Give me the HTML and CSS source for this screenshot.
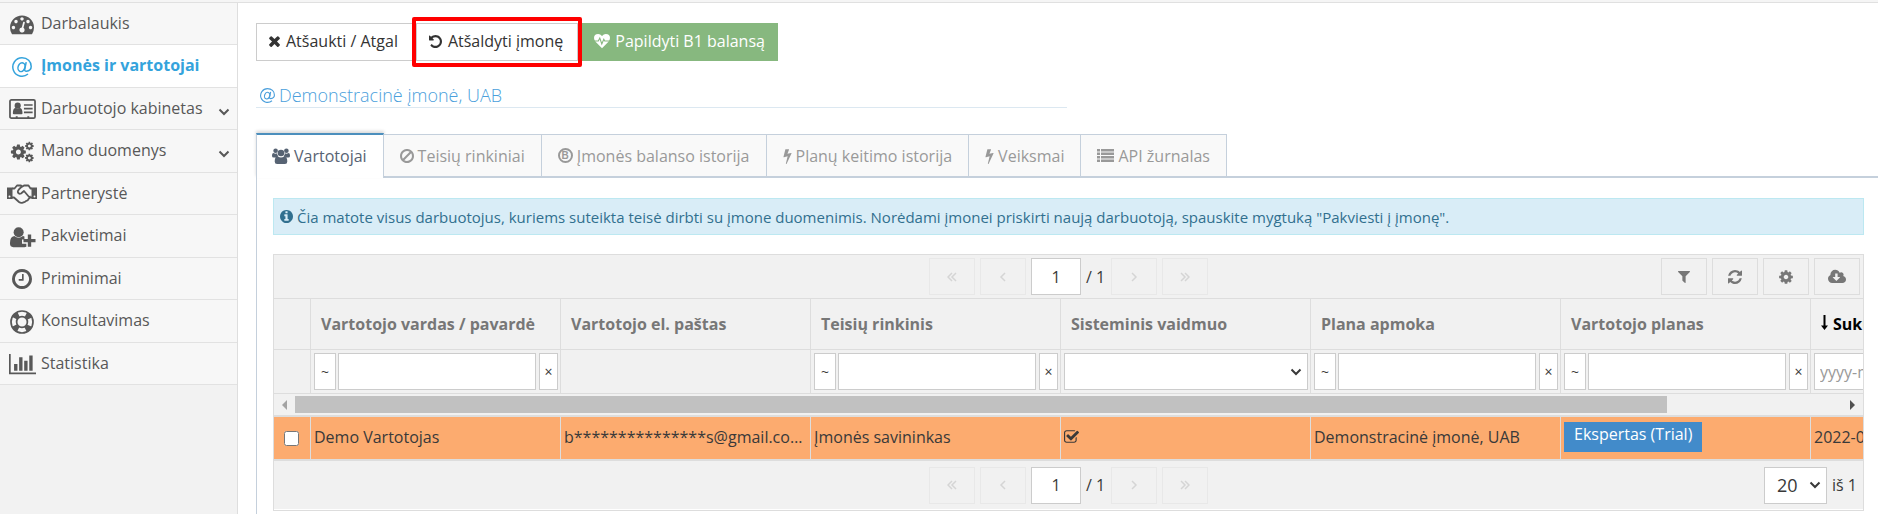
FILE: index.html
```html
<!DOCTYPE html>
<html lang="lt">
<head>
<meta charset="utf-8">
<title>Įmonės ir vartotojai</title>
<link rel="stylesheet" href="styles.css">
</head>
<body>
<svg class="sprite" aria-hidden="true">
  <symbol id="dash" viewBox="0 0 1792 1792"><path d="M384 1152q0-53-37.500-90.500t-90.500-37.500-90.500 37.500-37.500 90.500 37.500 90.500 90.500 37.500 90.500-37.500 37.500-90.500zm192-448q0-53-37.500-90.500t-90.500-37.500-90.500 37.500-37.500 90.500 37.500 90.500 90.500 37.500 90.500-37.500 37.500-90.500zm428 481l101-382q6-26-7.500-48.500t-38.500-29.500-48 6.500-30 39.500l-101 382q-60 5-107 43.500t-63 98.500q-20 77 20 146t117 89 146-20 89-117q16-60-6-117t-72-91zm660-33q0-53-37.500-90.500t-90.500-37.500-90.500 37.500-37.500 90.500 37.500 90.500 90.500 37.500 90.500-37.500 37.500-90.500zm-640-640q0-53-37.500-90.500t-90.500-37.500-90.500 37.500-37.500 90.500 37.500 90.500 90.500 37.500 90.500-37.500 37.500-90.500zm448 192q0-53-37.500-90.500t-90.500-37.500-90.500 37.500-37.500 90.500 37.500 90.500 90.500 37.500 90.500-37.500 37.500-90.500zm320 448q0 261-141 483-19 29-54 29h-1402q-35 0-54-29-141-221-141-483 0-182 71-348t191-286 286-191 348-71 348 71 286 191 191 286 71 348z"/></symbol>
  <symbol id="at" viewBox="0 0 20 20"><g fill="none" stroke="currentColor" stroke-width="1.500"><ellipse cx="9.500" cy="10.200" rx="3.400" ry="4.500" transform="rotate(20 9.500 10.200)"/><path d="M14.200 5.200L12.700 12.400Q12.500 14.300 14.400 14.200 19.200 13.600 19.200 9.400C19.200 4.500 15.500.8 10 .8A9.200 9.200 0 1 0 16 17"/></g></symbol>
  <symbol id="card" viewBox="0 0 28 22"><rect x="1" y="1.500" width="26" height="19" rx="1.500" fill="none" stroke="currentColor" stroke-width="1.800"/><circle cx="9" cy="7.500" r="3.200"/><path d="M4 15.500q0-5.500 3-5.500 2 1.500 4 0 3 0 3 5.500 0 1-1 1h-8q-1 0-1-1zM15.500 6h9v1.700h-9zM15.500 9.800h9v1.700h-9zM15.500 13.600h9v1.700h-9zM7 18.500h2v2h-2zM19 18.500h2v2h-2z"/></symbol>
  <symbol id="cog" viewBox="0 0 1792 1792"><path d="M1152 896q0-106-75-181t-181-75-181 75-75 181 75 181 181 75 181-75 75-181zm512-109v222q0 12-8 23t-20 13l-185 28q-19 54-39 91 35 50 107 138 10 12 10 25t-9 23q-27 37-99 108t-94 71q-12 0-26-9l-138-108q-44 23-91 38-16 136-29 186-7 28-36 28h-222q-14 0-24.500-8.500t-11.500-21.500l-28-184q-49-16-90-37l-141 107q-10 9-25 9-14 0-25-11-126-114-165-168-7-10-7-23 0-12 8-23 15-21 51-66.500t54-70.500q-27-50-41-99l-183-27q-13-2-21-12.500t-8-23.500v-222q0-12 8-23t19-13l186-28q14-46 39-92-40-57-107-138-10-12-10-24 0-10 9-23 26-36 98.500-107.500t94.500-71.500q13 0 26 10l138 107q44-23 91-38 16-136 29-186 7-28 36-28h222q14 0 24.500 8.500t11.500 21.500l28 184q49 16 90 37l142-107q9-9 24-9 13 0 25 10 129 119 165 170 7 8 7 22 0 12-8 23-15 21-51 66.500t-54 70.500q26 50 41 98l183 28q13 2 21 12.500t8 23.500z"/></symbol>
  <symbol id="cogs" viewBox="0 0 26 24"><use href="#cog" x="-1" y="2.500" width="19" height="19"/><use href="#cog" x="15" y="0" width="11" height="11"/><use href="#cog" x="15" y="13" width="11" height="11"/></symbol>
  <symbol id="shake" viewBox="0 0 30 20"><path d="M0 3.500h5.500v11.500H0zM24.500 3.500H30v11.500h-5.500z"/><g fill="none" stroke="currentColor" stroke-width="1.800" stroke-linejoin="round"><path d="M5 4.500h2.500L10 1.500h4l1.500 1L17 1.500h4.500l2 3H25M5 13.500h2l5 4.500q2 1.500 4 .5 2-.2 3-1.500 2 0 2.500-2 2-1 1-3M25 13.500h-2.500L17 7l-3 2.500q-2 1-3-1t4-6"/></g><g fill="#f7f7f7"><circle cx="2.500" cy="12.500" r="1"/><circle cx="27.500" cy="12.500" r="1"/></g></symbol>
  <symbol id="userplus" viewBox="0 0 28 21"><circle cx="10" cy="5.500" r="5.200"/><path d="M1 17q0-7 4.500-7.500 4.500 3.500 9 0l1.500.5v3h-2.500v4.500H18v3q-1 .5-2 .5H4.500Q1 21 1 17zM19.500 8h3.500v4.500h4.500V16H23v4.500h-3.500V16H15v-3.500h4.500z"/></symbol>
  <symbol id="clock" viewBox="128 128 1536 1536"><path d="M1024 544v448q0 14-9 23t-23 9h-320q-14 0-23-9t-9-23v-64q0-14 9-23t23-9h224v-352q0-14 9-23t23-9h64q14 0 23 9t9 23zm416 352q0-148-73-273t-198-198-273-73-273 73-198 198-73 273 73 273 198 198 273 73 273-73 198-198 73-273zm224 0q0 209-103 385.500t-279.500 279.500-385.500 103-385.500-103-279.500-279.500-103-385.500 103-385.500 279.500-279.500 385.500-103 385.500 103 279.500 279.500 103 385.500z"/></symbol>
  <symbol id="ring" viewBox="0 0 24 24"><g fill="none" stroke="currentColor"><circle cx="12" cy="12" r="11" stroke-width="1.700"/><circle cx="12" cy="12" r="5.400" stroke-width="1.700"/><circle cx="12" cy="12" r="8.200" stroke-width="5.500" stroke-dasharray="5.400 7.480" stroke-dashoffset="-3.740"/></g></symbol>
  <symbol id="chart" viewBox="0 128 2048 1536"><path d="M640 896v512h-256v-512h256zm384-512v1024h-256v-1024h256zm1024 1152v128h-2048v-1536h128v1408h1920zm-640-896v768h-256v-768h256zm384-384v1152h-256v-1152h256z"/></symbol>
  <symbol id="chev" viewBox="0 0 12 8"><path d="M1.500 1.500L6 6l4.500-4.500" fill="none" stroke="currentColor" stroke-width="2"/></symbol>
  <symbol id="times" viewBox="302 238 1188 1316"><path d="M1490 1322q0 40-28 68l-136 136q-28 28-68 28t-68-28l-294-294-294 294q-28 28-68 28t-68-28l-136-136q-28-28-28-68t28-68l294-294-294-294q-28-28-28-68t28-68l136-136q28-28 68-28t68 28l294 294 294-294q28-28 68-28t68 28l136 136q28 28 28 68t-28 68l-294 294 294 294q28 28 28 68z"/></symbol>
  <symbol id="undo" viewBox="128 128 1536 1536"><path d="M1664 896q0 156-61 298t-164 245-245 164-298 61q-172 0-327-72.500t-264-204.500q-7-10-6.500-22.500t8.500-20.500l137-138q10-9 25-9 16 2 23 12 73 95 179 147t225 52q104 0 198.500-40.500t163.500-109.500 109.500-163.500 40.500-198.500-40.500-198.500-109.500-163.500-163.500-109.500-198.500-40.500q-98 0-188 35.500t-160 101.500l137 138q31 30 14 69-17 40-59 40h-448q-26 0-45-19t-19-45v-448q0-42 40-59 39-17 69 14l130 129q107-101 244.500-156.500t284.500-55.500q156 0 298 61t245 164 164 245 61 298z"/></symbol>
  <symbol id="heart" viewBox="0 0 16 15"><path d="M8 14.800L1.800 8.600Q0 6.600 0 4.600 0 .5 4.200.5 6.300.5 8 2.600 9.700.5 11.800.5 16 .5 16 4.600q0 2-1.800 4z"/><path d="M0 7.500h4.300L5.800 4.600l2 5.800 2-4.700.9 1.800H16" fill="none" stroke="#87b87f" stroke-width="1.100"/></symbol>
  <symbol id="users" viewBox="0 0 18 16"><circle cx="3.600" cy="2.800" r="2.300"/><circle cx="14.400" cy="2.800" r="2.300"/><circle cx="9" cy="5" r="3.300"/><path d="M0 8q0-3 1.500-3 2 1.300 3.600.3Q5 7 6.300 8.300 4.600 8.400 3.800 9.600H1.700Q0 9.600 0 8zM18 8q0-3-1.500-3-2 1.300-3.600.3 0 1.700-1.200 3 1.700.1 2.500 1.300h2.100Q18 9.600 18 8zM2.700 13.500q0-5 3.200-5 3.100 2.200 6.200 0 3.200 0 3.200 5 0 2.500-2.400 2.500H5.100q-2.400 0-2.400-2.500z"/></symbol>
  <symbol id="ban" viewBox="128 128 1536 1536"><path d="M1440 893q0-161-87-295l-754 753q137 89 297 89 111 0 211.500-43.500t173.500-116.500 116-174.500 43-212.500zm-999 299l755-754q-135-91-300-91-148 0-273 73t-198 199-73 274q0 162 89 299zm1223-299q0 157-61 300t-163.500 246-245 164-298.500 61-298.500-61-245-164-163.500-246-61-300 61-299.500 163.500-245.500 245-164 298.500-61 298.500 61 245 164 163.500 245.500 61 299.500z"/></symbol>
  <symbol id="bolt" viewBox="440 0 910 1792"><path d="M1333 566q18 20 7 44l-540 1157q-13 25-42 25-4 0-14-2-17-5-25.500-19t-4.500-30l197-808-406 101q-4 1-12 1-18 0-31-11-18-15-13-39l201-825q4-14 16-23t28-9h328q19 0 32 12.500t13 29.500q0 8-5 18l-171 463 396-98q8-2 12-2 19 0 34 15z"/></symbol>
  <symbol id="list" viewBox="0 0 17 13"><path d="M0 0h3v2.500H0zM4 0h13v2.500H4zM0 3.500h3V6H0zM4 3.500h13V6H4zM0 7h3v2.500H0zM4 7h13v2.500H4zM0 10.500h3V13H0zM4 10.500h13V13H4z"/></symbol>
  <symbol id="info" viewBox="128 128 1536 1536"><path d="M1152 1376v-160q0-14-9-23t-23-9h-96v-512q0-14-9-23t-23-9h-320q-14 0-23 9t-9 23v160q0 14 9 23t23 9h96v320h-96q-14 0-23 9t-9 23v160q0 14 9 23t23 9h448q14 0 23-9t9-23zm-128-896v-160q0-14-9-23t-23-9h-192q-14 0-23 9t-9 23v160q0 14 9 23t23 9h192q14 0 23-9t9-23zm640 416q0 209-103 385.500t-279.500 279.500-385.500 103-385.500-103-279.500-279.500-103-385.500 103-385.500 279.500-279.500 385.500-103 385.500 103 279.500 279.500 103 385.500z"/></symbol>
  <symbol id="filter" viewBox="190 256 1412 1408"><path d="M1595 295q17 41-14 70l-493 493v742q0 42-39 59-13 5-25 5-27 0-45-19l-256-256q-19-19-19-45v-486l-493-493q-31-29-14-70 17-39 59-39h1280q42 0 59 39z"/></symbol>
  <symbol id="refresh" viewBox="128 128 1536 1536"><path d="M1639 1056q0 5-1 7-64 268-268 434.500t-478 166.500q-146 0-282.500-55t-243.500-157l-129 129q-19 19-45 19t-45-19-19-45v-448q0-26 19-45t45-19h448q26 0 45 19t19 45-19 45l-137 137q71 66 161 102t187 36q134 0 250-65t186-179q11-17 53-117 8-23 30-23h192q13 0 22.500 9.500t9.500 22.500zm25-800v448q0 26-19 45t-45 19h-448q-26 0-45-19t-19-45 19-45l138-138q-148-137-349-137-134 0-250 65t-186 179q-11 17-53 117-8 23-30 23h-199q-13 0-22.500-9.500t-9.500-22.500v-7q65-268 270-434.500t480-166.500q146 0 284 55.500t245 156.500l130-129q19-19 45-19t45 19 19 45z"/></symbol>
  <symbol id="cloud" viewBox="-64 256 1920 1280"><path d="M1216 928q0-14-9-23t-23-9h-224v-352q0-13-9.500-22.500t-22.500-9.500h-192q-13 0-22.500 9.500t-9.500 22.500v352h-224q-13 0-22.500 9.500t-9.500 22.500q0 14 9 23l352 352q9 9 23 9t23-9l351-351q10-12 10-24zm640 224q0 159-112.500 271.500t-271.500 112.500h-1088q-185 0-316.500-131.500t-131.500-316.500q0-130 70-240t188-165q-2-30-2-43 0-212 150-362t362-150q156 0 285.500 87t188.500 231q71-62 166-62 106 0 181 75t75 181q0 76-41 138 130 31 213.500 135.500t83.500 238.500z"/></symbol>
  <symbol id="checked" viewBox="64 128 1664 1408"><path d="M1472 930v318q0 119-84.500 203.500t-203.500 84.500h-832q-119 0-203.500-84.500t-84.500-203.500v-832q0-119 84.500-203.500t203.500-84.500h832q63 0 117 25 15 7 18 23 3 17-9 29l-49 49q-10 10-23 10-3 0-9-2-23-6-45-6h-832q-66 0-113 47t-47 113v832q0 66 47 113t113 47h832q66 0 113-47t47-113v-254q0-13 9-22l64-64q10-10 23-10 6 0 12 3 20 8 20 29zm231-489l-814 814q-24 24-57 24t-57-24l-430-430q-24-24-24-57t24-57l110-110q24-24 57-24t57 24l263 263 647-647q24-24 57-24t57 24l110 110q24 24 24 57t-24 57z"/></symbol>
  <symbol id="left" viewBox="0 0 10 10"><path d="M7 1L3 5l4 4" fill="none" stroke="currentColor" stroke-width="1.500"/></symbol>
  <symbol id="right" viewBox="0 0 10 10"><path d="M3 1l4 4-4 4" fill="none" stroke="currentColor" stroke-width="1.500"/></symbol>
  <symbol id="first" viewBox="0 0 10 10"><path d="M5 1L1 5l4 4M9 1L5 5l4 4" fill="none" stroke="currentColor" stroke-width="1.500"/></symbol>
  <symbol id="last" viewBox="0 0 10 10"><path d="M1 1l4 4-4 4M5 1l4 4-4 4" fill="none" stroke="currentColor" stroke-width="1.500"/></symbol>
  <symbol id="down" viewBox="0 0 7 15"><path d="M2.500 0h2v10.500H7L3.500 15 0 10.500h2.500z"/></symbol>
</svg>
<div class="topline"></div>
<div class="app">
  <nav class="sidebar">
    <ul class="menu">
      <li><a href="#"><span class="slot"><svg class="i24"><use href="#dash"/></svg></span>Darbalaukis</a></li>
      <li class="current"><a href="#"><span class="slot"><svg class="i20"><use href="#at"/></svg></span>Įmonės ir vartotojai</a></li>
      <li><a href="#"><span class="slot"><svg class="i26"><use href="#card"/></svg></span>Darbuotojo kabinetas<svg class="arrow"><use href="#chev"/></svg></a></li>
      <li><a href="#"><span class="slot"><svg class="i26"><use href="#cogs"/></svg></span>Mano duomenys<svg class="arrow"><use href="#chev"/></svg></a></li>
      <li><a href="#"><span class="slot"><svg class="i30"><use href="#shake"/></svg></span>Partnerystė</a></li>
      <li><a href="#"><span class="slot"><svg class="i26"><use href="#userplus"/></svg></span>Pakvietimai</a></li>
      <li><a href="#"><span class="slot"><svg class="i20"><use href="#clock"/></svg></span>Priminimai</a></li>
      <li><a href="#"><span class="slot"><svg class="i24"><use href="#ring"/></svg></span>Konsultavimas</a></li>
      <li><a href="#"><span class="slot"><svg class="i26"><use href="#chart"/></svg></span>Statistika</a></li>
    </ul>
  </nav>
  <main class="main">
    <div class="actions">
      <button class="btn"><svg class="i11"><use href="#times"/></svg>Atšaukti / Atgal</button>
      <button class="btn marked"><svg class="i13"><use href="#undo"/></svg>Atšaldyti įmonę</button>
      <button class="btn success"><svg class="i16"><use href="#heart"/></svg>Papildyti B1 balansą</button>
    </div>
    <h1 class="title"><svg class="i15"><use href="#at"/></svg>Demonstracinė įmonė, UAB</h1>
    <div class="tabs">
      <a href="#" class="tab active"><svg class="i18"><use href="#users"/></svg>Vartotojai</a>
      <a href="#" class="tab"><svg class="i14"><use href="#ban"/></svg>Teisių rinkiniai</a>
      <a href="#" class="tab"><span class="coin">B</span>Įmonės balanso istorija</a>
      <a href="#" class="tab"><svg class="i9"><use href="#bolt"/></svg>Planų keitimo istorija</a>
      <a href="#" class="tab"><svg class="i9"><use href="#bolt"/></svg>Veiksmai</a>
      <a href="#" class="tab"><svg class="i17"><use href="#list"/></svg>API žurnalas</a>
    </div>
    <section class="panel">
      <p class="alert"><svg class="i13"><use href="#info"/></svg>Čia matote visus darbuotojus, kuriems suteikta teisė dirbti su įmone duomenimis. Norėdami įmonei priskirti naują darbuotoją, spauskite mygtuką "Pakviesti į įmonę".</p>
      <div class="grid">
        <div class="bar">
          <div class="pager">
            <button class="tool" disabled aria-label="Pirmas"><svg class="i10"><use href="#first"/></svg></button>
            <button class="tool" disabled aria-label="Ankstesnis"><svg class="i10"><use href="#left"/></svg></button>
            <input class="page" value="1" aria-label="Puslapis">
            <span class="total">/ 1</span>
            <button class="tool" disabled aria-label="Kitas"><svg class="i10"><use href="#right"/></svg></button>
            <button class="tool" disabled aria-label="Paskutinis"><svg class="i10"><use href="#last"/></svg></button>
          </div>
          <div class="side">
            <button class="tool" aria-label="Filtras"><svg class="i12"><use href="#filter"/></svg></button>
            <button class="tool" aria-label="Atnaujinti"><svg class="i14"><use href="#refresh"/></svg></button>
            <button class="tool" aria-label="Nustatymai"><svg class="i16"><use href="#cog"/></svg></button>
            <button class="tool" aria-label="Atsisiųsti"><svg class="i18"><use href="#cloud"/></svg></button>
          </div>
        </div>
        <div class="clip">
          <table class="cells">
            <colgroup><col class="pick"><col span="7" class="wide"></colgroup>
            <thead>
              <tr class="names">
                <th></th><th>Vartotojo vardas / pavardė</th><th>Vartotojo el. paštas</th><th>Teisių rinkinis</th><th>Sisteminis vaidmuo</th><th>Plana apmoka</th><th>Vartotojo planas</th><th class="sorted"><svg class="sort"><use href="#down"/></svg>Sukurta</th>
              </tr>
              <tr class="filters">
                <td></td>
                <td><div class="filter"><button class="op">~</button><input aria-label="Vartotojo vardas / pavardė"><button class="clear">×</button></div></td>
                <td></td>
                <td><div class="filter"><button class="op">~</button><input aria-label="Teisių rinkinis"><button class="clear">×</button></div></td>
                <td><div class="filter choose"><select aria-label="Sisteminis vaidmuo"><option></option></select><svg class="caret"><use href="#chev"/></svg></div></td>
                <td><div class="filter"><button class="op">~</button><input aria-label="Plana apmoka"><button class="clear">×</button></div></td>
                <td><div class="filter"><button class="op">~</button><input aria-label="Vartotojo planas"><button class="clear">×</button></div></td>
                <td><div class="filter"><input class="date" placeholder="yyyy-mm-dd" aria-label="Sukurta"></div></td>
              </tr>
            </thead>
          </table>
        </div>
        <div class="scroll"><span class="prev"></span><span class="track"><span class="thumb"></span></span><span class="next"></span></div>
        <div class="clip">
          <table class="cells rows">
            <colgroup><col class="pick"><col span="7" class="wide"></colgroup>
            <tbody>
              <tr>
                <td class="tick"><input type="checkbox" aria-label="Pažymėti eilutę"></td><td>Demo Vartotojas</td><td>b***************s@gmail.com.lt</td><td>Įmonės savininkas</td><td><svg class="yes"><use href="#checked"/></svg></td><td>Demonstracinė įmonė, UAB</td><td><span class="label">Ekspertas (Trial)</span></td><td>2022-01-12</td>
              </tr>
            </tbody>
          </table>
        </div>
        <div class="bar foot">
          <div class="pager">
            <button class="tool" disabled aria-label="Pirmas"><svg class="i10"><use href="#first"/></svg></button>
            <button class="tool" disabled aria-label="Ankstesnis"><svg class="i10"><use href="#left"/></svg></button>
            <input class="page" value="1" aria-label="Puslapis">
            <span class="total">/ 1</span>
            <button class="tool" disabled aria-label="Kitas"><svg class="i10"><use href="#right"/></svg></button>
            <button class="tool" disabled aria-label="Paskutinis"><svg class="i10"><use href="#last"/></svg></button>
          </div>
          <div class="side">
            <div class="choose"><select class="size" aria-label="Eilučių skaičius"><option>20</option></select><svg class="caret"><use href="#chev"/></svg></div>
            <span>iš 1</span>
          </div>
        </div>
      </div>
    </section>
  </main>
</div>
</body>
</html>
```

FILE: styles.css
```css
* { box-sizing: border-box; }

body {
  margin: 0;
  font: 16px/24px "Open Sans", "Noto Sans", sans-serif;
  color: #393939;
  background: #fff;
  overflow: hidden;
}

button, input, select { font: inherit; color: inherit; margin: 0; }
svg { fill: currentColor; flex: none; }
.sprite { position: absolute; width: 0; height: 0; }

.i9 { width: 9px; height: 16px; }
.i10 { width: 10px; height: 10px; }
.i11 { width: 11px; height: 12px; }
.i12 { width: 12px; height: 12px; }
.i13 { width: 13px; height: 13px; }
.i14 { width: 14px; height: 14px; }
.i15 { width: 15px; height: 15px; }
.i16 { width: 16px; height: 16px; }
.i17 { width: 17px; height: 13px; }
.i18 { width: 18px; height: 16px; }
.i20 { width: 20px; height: 20px; }
.i24 { width: 24px; height: 24px; }
.i26 { width: 27px; height: 22px; }
.i30 { width: 30px; height: 20px; }

.topline { height: 3px; background: #f5f5f5; border-bottom: 1px solid #e0e0e0; }
.app { display: flex; min-height: calc(100vh - 3px); }

.sidebar {
  flex: none;
  width: 238px;
  background: #f2f2f2;
  border-right: 1px solid #dedede;
}
.menu { list-style: none; margin: 0; padding: 0; }
.menu a {
  display: flex;
  align-items: center;
  height: 42px;
  padding: 0 7px 2px 0;
  color: #585858;
  background: #f7f7f7;
  border-bottom: 1px solid #e2e2e2;
  text-decoration: none;
}
.menu li:nth-child(even) a { height: 43px; }
.menu .current a { background: #fff; color: #34a3dc; font-weight: 700; }
.slot { display: flex; justify-content: center; width: 30px; margin: 3px 4px 0 7px; }
.arrow { width: 12px; height: 8px; margin: 8px 0 0 auto; }

.main { flex: 1; min-width: 0; padding: 20px 0 0 18px; }

.actions { display: flex; gap: 3px; }
.btn {
  display: flex;
  align-items: center;
  gap: 6px;
  height: 38px;
  padding: 0 14px 2px 12px;
  color: #333;
  background: #fff;
  border: 1px solid #ccc;
  white-space: nowrap;
}
.marked { position: relative; }
.marked::after {
  content: "";
  position: absolute;
  inset: -7px -5px;
  border: 4px solid #f00;
  border-radius: 2px;
}
.success { gap: 5px; padding-right: 12px; color: #fff; background: #87b87f; border-color: #87b87f; }

.title {
  display: flex;
  align-items: center;
  gap: 4px;
  width: 50%;
  height: 26px;
  margin: 21px 0 0;
  padding: 1px 4px 0;
  color: #4b9fdc;
  border-bottom: 1px solid #dce8f1;
  font-size: 18px;
  font-weight: 300;
}

.tabs {
  display: flex;
  height: 45px;
  margin: 25px 0 0;
  border-bottom: 2px solid #c5d0dc;
}
.tab {
  display: flex;
  align-items: center;
  gap: 4px;
  margin-top: 1px;
  padding: 0 16px;
  color: #999;
  background: #f9f9f9;
  border: 1px solid #c5d0dc;
  border-width: 1px 1px 0 0;
  text-decoration: none;
  white-space: nowrap;
}
.tab.active {
  margin: 0 0 -2px;
  padding: 0 16px 1px 15px;
  color: #576373;
  background: #fff;
  border-width: 2px 1px 0;
  border-top-color: #4c8fbd;
  box-shadow: 0 -2px 3px rgba(0, 0, 0, 0.15);
}
.coin {
  width: 15px;
  height: 15px;
  border: 2px solid #999;
  border-radius: 50%;
  font: 700 10px/11px "Liberation Sans", sans-serif;
  text-align: center;
}

.panel {
  padding: 20px 14px 20px 16px;
  border-left: 1px solid #c5d0dc;
}
.alert {
  display: flex;
  align-items: center;
  gap: 4px;
  height: 37px;
  margin: 0 0 19px;
  padding: 0 6px;
  color: #31708f;
  background: #d9edf7;
  border: 1px solid #bce8f1;
  font-size: 15px;
  white-space: nowrap;
}

.grid { border: 1px solid #ddd; background: #f1f1f1; }
.bar {
  display: grid;
  grid-template-columns: 1fr auto 1fr;
  align-items: center;
  height: 43px;
  padding: 0 3px;
}
.pager, .side { display: flex; align-items: center; gap: 5px; }
.pager { grid-column: 2; }
.side { justify-content: flex-end; }
.tool {
  display: flex;
  align-items: center;
  justify-content: center;
  width: 46px;
  height: 37px;
  padding: 0;
  color: #777;
  background: #f1f1f1;
  border: 1px solid #ddd;
}
.tool:disabled { color: #d5d5d5; border-color: #e8e8e8; }
.page { width: 50px; height: 37px; padding: 0; text-align: center; border: 1px solid #ccc; background: #fff; }
.total { width: 20px; white-space: nowrap; }

.clip { overflow: hidden; }
.cells { width: 1786px; table-layout: fixed; border-spacing: 0; }
.pick { width: 36px; }
.wide { width: 250px; }
.cells th, .cells td { padding: 0; border-left: 1px solid #ddd; text-align: left; }
.cells th:first-child, .cells td:first-child { border-left: 0; }
.names th { height: 51px; padding: 0 10px; border-top: 1px solid #ddd; color: #777; font-weight: 700; }
.cells .sorted { color: #000; }
.sort { width: 7px; height: 15px; margin-right: 5px; }
.filters td { height: 45px; border-top: 1px solid #ddd; border-bottom: 1px solid #ddd; }
.filters td > div { padding: 0 2px 0 3px; }
.filter { display: flex; align-items: center; }
.filter input, .op, .clear, select {
  height: 37px;
  padding: 0 5px;
  border: 1px solid #ccc;
  border-radius: 0;
  background: #fff;
}
.filter input { flex: 1; min-width: 0; margin: 0 3px 0 2px; }
.filter .date { margin: 0; }
.date::placeholder { color: #999; }
.op { width: 22px; font-size: 14px; }
.clear { width: 19px; padding: 0; font-size: 14px; }
.choose { display: grid; align-items: center; }
.choose > * { grid-area: 1 / 1; }
select { appearance: none; width: 100%; }
.caret { justify-self: end; width: 12px; height: 8px; margin-right: 6px; pointer-events: none; }

.scroll { display: flex; align-items: center; height: 21px; padding: 0 8px; }
.track { flex: 1; height: 17px; margin: 0 13px 0 8px; }
.thumb { display: block; width: 89%; height: 17px; background: #c1c1c1; }
.prev, .next { border: 5px solid transparent; }
.prev { border-left: 0; border-right-color: #a3a3a3; }
.next { border-right: 0; border-left-color: #505050; }

.rows { background: #fcab6f; border: 2px solid #ddd; border-width: 2px 0; }
.cells.rows td {
  height: 42px;
  padding: 0 3px 2px;
  overflow: hidden;
  text-overflow: ellipsis;
  white-space: nowrap;
}
.cells.rows .tick { padding: 0 1px 2px 0; text-align: center; }
.tick input { width: 15px; height: 15px; vertical-align: middle; }
.yes { width: 15px; height: 13px; }
.label {
  display: inline-block;
  height: 30px;
  padding: 0 10px;
  color: #fff;
  background: #428bca;
  vertical-align: middle;
}

.foot { height: 49px; border-bottom: 1px solid #fff; }
.foot .side { padding-right: 3px; }
.size { width: 63px; padding: 0 12px; font-size: 18px; }
```
